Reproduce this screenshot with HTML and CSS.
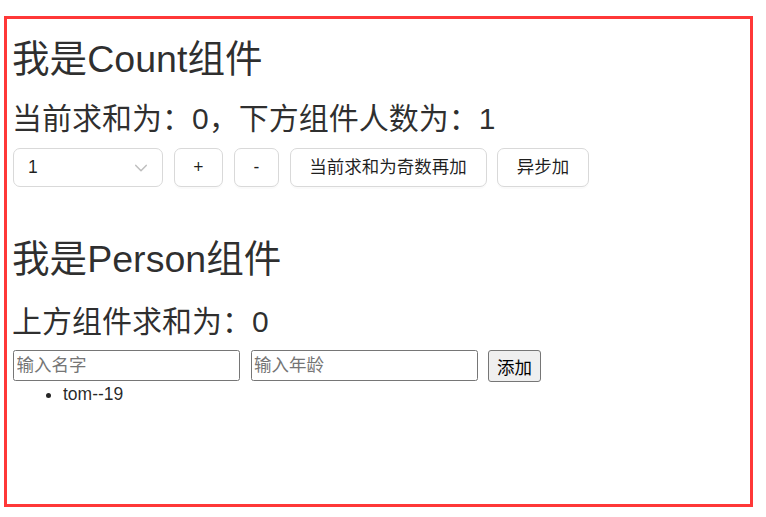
FILE: index.html
```html
<!DOCTYPE html>
<html lang="zh-CN">
<head>
<meta charset="utf-8">
<title>Count / Person</title>
<link rel="stylesheet" href="styles.css">
</head>
<body>
<div class="frame">
  <section class="count">
    <h1 class="title">我是Count组件</h1>
    <h2 class="subtitle">当前求和为：0，下方组件人数为：1</h2>
    <div class="controls">
      <div class="select">
        <span class="select-value">1</span>
        <svg class="select-arrow" width="12" height="12" viewBox="0 0 12 12"><path d="M0.8 3.4 L6 8.8 L11.2 3.4" fill="none" stroke="#bfbfbf" stroke-width="1.5" stroke-linecap="round" stroke-linejoin="round"/></svg>
      </div>
      <button class="btn">+</button>
      <button class="btn">-</button>
      <button class="btn">当前求和为奇数再加</button>
      <button class="btn">异步加</button>
    </div>
  </section>
  <section class="person">
    <h1 class="title">我是Person组件</h1>
    <h2 class="subtitle subtitle-person">上方组件求和为：0</h2>
    <div class="form">
      <input class="field" type="text" placeholder="输入名字">
      <input class="field" type="text" placeholder="输入年龄">
      <button class="native-btn">添加</button>
    </div>
    <ul class="people">
      <li>tom--19</li>
    </ul>
  </section>
</div>
</body>
</html>
```

FILE: styles.css
```css
* { box-sizing: border-box; }

html, body {
  margin: 0;
  padding: 0;
  background: #ffffff;
}

body {
  font-family: "Liberation Sans", "Noto Sans CJK SC", sans-serif;
  color: rgba(0, 0, 0, 0.85);
}

.frame {
  margin: 16px 0 0 4px;
  width: 749px;
  height: 491px;
  border: 3px solid #ff3838;
  padding: 17px 5px 0 5px;
}

.title {
  margin: 0 0 19px 0;
  font-size: 37.6px;
  line-height: 46px;
  font-weight: 400;
  color: rgba(0, 0, 0, 0.82);
}

.subtitle {
  margin: 0 0 11px 0;
  font-size: 30px;
  line-height: 36px;
  font-weight: 400;
  color: rgba(0, 0, 0, 0.82);
}

.subtitle-person {
  margin-bottom: 10px;
}

.controls {
  display: flex;
  align-items: center;
  gap: 10.5px;
  padding-left: 1px;
  height: 39px;
}

.select {
  width: 150px;
  height: 39px;
  border: 1px solid #d9d9d9;
  border-radius: 7px;
  background: #fff;
  display: flex;
  align-items: center;
  justify-content: space-between;
  padding: 0 15px 0 14px;
  font-size: 17.5px;
  color: rgba(0, 0, 0, 0.88);
}

.select-arrow {
  display: block;
}

.btn {
  height: 39px;
  padding: 0 18.75px;
  border: 1px solid #d9d9d9;
  border-radius: 7px;
  background: #fff;
  box-shadow: 0 2px 0 rgba(0, 0, 0, 0.02);
  font-family: "Liberation Sans", "Noto Sans CJK SC", sans-serif;
  font-size: 17.5px;
  color: rgba(0, 0, 0, 0.88);
  line-height: 1;
  cursor: pointer;
}

.person {
  margin-top: 49px;
}

.person .title {
  margin-bottom: 22px;
}

.form {
  display: flex;
  align-items: flex-start;
  gap: 10.5px;
  padding-left: 1px;
}

.field {
  width: 227px;
  height: 31px;
  margin: 0;
  border: 1px solid #767676;
  border-radius: 2.5px;
  padding: 1px 2.5px;
  font-family: "Liberation Sans", "Noto Sans CJK SC", sans-serif;
  font-size: 17.5px;
  color: #000;
  background: #fff;
}

.field::placeholder {
  color: #757575;
}

.native-btn {
  height: 32px;
  margin: 0;
  padding: 1px 8px;
  border: 1px solid #767676;
  border-radius: 3px;
  background: #efefef;
  font-family: "Liberation Sans", "Noto Sans CJK SC", sans-serif;
  font-size: 17.5px;
  color: #000;
}

.people {
  margin: 2px 0 0 0;
  padding-left: 51px;
  font-size: 17.5px;
  line-height: 20px;
  color: rgba(0, 0, 0, 0.85);
}
```
